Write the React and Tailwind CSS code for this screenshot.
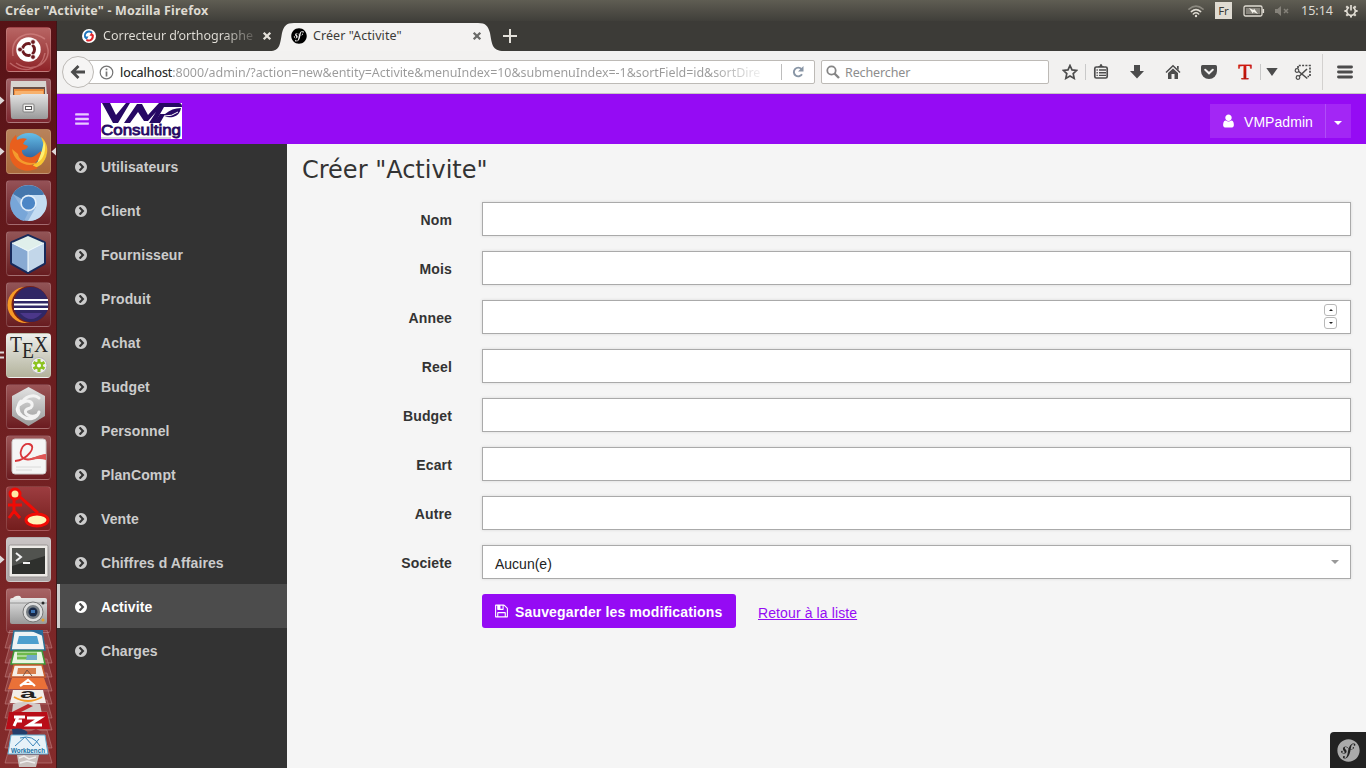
import React from "react";
import { FaSymfony } from "react-icons/fa";

const FA = {
  bars: "M1664 1344v128q0 26-19 45t-45 19h-1408q-26 0-45-19t-19-45v-128q0-26 19-45t45-19h1408q26 0 45 19t19 45zm0-512v128q0 26-19 45t-45 19h-1408q-26 0-45-19t-19-45v-128q0-26 19-45t45-19h1408q26 0 45 19t19 45zm0-512v128q0 26-19 45t-45 19h-1408q-26 0-45-19t-19-45v-128q0-26 19-45t45-19h1408q26 0 45 19t19 45z",
  user: "M1536 1399q0 109-62.5 187t-150.5 78h-854q-88 0-150.5-78t-62.5-187q0-85 8.5-160.5t31.5-152 58.5-131 94-89 134.5-34.5q131 128 313 128t313-128q76 0 134.5 34.5t94 89 58.5 131 31.5 152 8.5 160.5zm-256-887q0 159-112.5 271.5t-271.5 112.5-271.5-112.5-112.5-271.5 112.5-271.5 271.5-112.5 271.5 112.5 112.5 271.5z",
  floppy: "M512 1536h768v-384h-768v384zm896 0h128v-896q0-14-10-38.5t-20-34.5l-281-281q-10-10-34-20t-39-10v416q0 40-28 68t-68 28h-576q-40 0-68-28t-28-68v-416h-128v1280h128v-416q0-40 28-68t68-28h832q40 0 68 28t28 68v416zm-384-928v-320q0-13-9.5-22.5t-22.5-9.5h-192q-13 0-22.5 9.5t-9.5 22.5v320q0 13 9.5 22.5t22.5 9.5h192q13 0 22.5-9.5t9.5-22.5zm640 32v928q0 40-28 68t-68 28h-1344q-40 0-68-28t-28-68v-1344q0-40 28-68t68-28h928q40 0 88 20t76 48l280 280q28 28 48 76t20 88z",
  chevron: "M845 1395l454-454q19-19 19-45t-19-45l-454-454q-19-19-45-19t-45 19l-102 102q-19 19-19 45t19 45l307 307-307 307q-19 19-19 45t19 45l102 102q19 19 45 19t45-19zm819-499q0 209-103 385.5t-279.5 279.5-385.5 103-385.5-103-279.5-279.5-103-385.5 103-385.5 279.5-279.5 385.5-103 385.5 103 279.5 279.5 103 385.5z",
};

function Fa({ name, className }) {
  return (
    <svg viewBox="0 0 1792 1792" className={className} fill="currentColor">
      <path d={FA[name]} />
    </svg>
  );
}

/* ---------- system bar ---------- */

function SystemBar() {
  return (
    <header className="flex h-[21px] shrink-0 items-center bg-linear-to-b from-[#5f5d53] to-[#403f3a] pl-[5px] pr-[8px] text-[#dfdbd2]">
      <h1 className="text-[12.5px] leading-[21px] font-bold tracking-[0.18px] whitespace-nowrap">Créer "Activite" - Mozilla Firefox</h1>
      <div className="ml-auto flex h-[21px] items-center">
        <svg width="18" height="14" viewBox="0 0 18 14" fill="none" strokeLinecap="round">
          <path d="M2 5.2Q9-.8 16 5.2" stroke="#8b887f" strokeWidth="1.6" />
          <path d="M4.300 7.600Q9 3.600 13.700 7.600" stroke="#dfdbd2" strokeWidth="1.500" />
          <path d="M6.300 10Q9 7.600 11.700 10" stroke="#dfdbd2" strokeWidth="1.500" />
          <circle cx="9" cy="12" r="1.200" fill="#dfdbd2" />
        </svg>
        <span className="ml-[10px] flex h-[17px] w-[17px] items-center justify-center bg-[#dfdbd2] text-[11.5px] leading-none text-[#3c3b37]">Fr</span>
        <svg className="ml-[11px]" width="22" height="12" viewBox="0 0 22 12">
          <rect x="1" y="1" width="18" height="10" rx="1.500" fill="none" stroke="#dfdbd2" strokeWidth="1.300" />
          <rect x="3" y="3" width="14" height="6" fill="#85827a" />
          <path d="M20.300 4v4" stroke="#dfdbd2" strokeWidth="1.600" />
          <path d="M6 3l4.500 2 .5-1.500L15 9l-4.500-2-.7 1.500z" fill="#f4f2ea" />
        </svg>
        <svg className="ml-[9px]" width="16" height="12" viewBox="0 0 16 12">
          <path d="M1 4h2.500L7 1v10L3.500 8H1z" fill="#85827a" />
          <path d="M10 4l4 4M14 4l-4 4" stroke="#85827a" strokeWidth="1.500" />
        </svg>
        <span className="ml-[11px] w-[33px] text-[12.5px] leading-[21px] whitespace-nowrap">15:14</span>
        <svg className="ml-[10px]" width="14" height="14" viewBox="0 0 14 14" fill="none" stroke="#dfdbd2">
          <path d="M5 3.200A4.300 4.300 0 1 0 9 3.200" strokeWidth="1.700" />
          <path d="M7 1v5.500" strokeWidth="1.700" />
          <path d="M.4 7h2M11.600 7h2M7 11.600v2M2.300 2.300l1.500 1.500M11.700 2.300l-1.500 1.500M2.300 11.700l1.500-1.500M11.700 11.700l-1.500-1.500" strokeWidth="2" />
        </svg>
      </div>
    </header>
  );
}

/* ---------- launcher ---------- */

const art = {
  ubuntu: (
    <g fill="none">
      <path d="M7 29C4 10 22 1 39 12M40 16C49 35 27 48 10 36M4 36C17 47 36 44 39 26" stroke="#dc9290" strokeWidth="1.500" opacity=".55" />
      <circle cx="22.500" cy="22.500" r="12.200" fill="#fff" />
      <circle cx="22.500" cy="22.500" r="6" stroke="#6d1b20" strokeWidth="3" />
      <path d="M22.500 22.500L11 22.500M22.500 22.500L28.500 12.500M22.500 22.500L28.500 33" stroke="#fff" strokeWidth="1.300" />
      <g fill="#6d1b20" stroke="#fff" strokeWidth=".8">
        <circle cx="14" cy="22.500" r="2.400" /><circle cx="27" cy="15" r="2.400" /><circle cx="27" cy="30" r="2.400" />
      </g>
    </g>
  ),
  files: (
    <g>
      <path d="M5 3h35l1 16H4z" fill="#d8d5d0" />
      <path d="M7 9h32v11H7z" fill="#6b5046" />
      <path d="M8 11h30v8H8z" fill="#ed8b3d" /><path d="M9 13h28v5H9z" fill="#f7b16d" />
      <path d="M4 17h10l2-1h26v23q0 2-2 2H7q-2 0-2-2z" fill="url(#silver)" />
      <rect x="17" y="26" width="11" height="8" rx="1" fill="#f0efed" stroke="#808080" />
      <rect x="19.500" y="28.500" width="6" height="3" fill="#fff" stroke="#585858" />
    </g>
  ),
  firefox: (
    <g>
      <circle cx="23" cy="22" r="18" fill="url(#globe)" />
      <path d="M35 8c5 4 7 10 6 16-1 9-8 16-18 16l5-5c6-2 8-7 7-12l3 1c1-6-1-11-3-16z" fill="#f9c531" />
      <path d="M4 15q2-6 6-9l1 5q5-3 10-1-3 2-4 5l5 2q-1 4-6 4c-1 6 8 10 14 5l5-4c0 8-5 12-9 14l6 3c-11 6-25 2-28-11q-1-7 0-13z" fill="#e95f1d" />
      <path d="M6 20c2 14 17 20 27 13-11 3-20-1-21-8" fill="#f59b2c" />
      <path d="M38 12c3 9 0 18-7 22 2-5 4-9 5-13" fill="#fff071" />
    </g>
  ),
  chromium: (
    <g>
      <circle cx="22.500" cy="23" r="18" fill="#91b6de" />
      <path d="M22.500 23L7 14a18 18 0 0 1 31 0z" fill="#4477ad" />
      <path d="M22.500 15H39a18 18 0 0 1-17 26l8-14z" fill="#c4dcf2" />
      <path d="M7 14l9 14 6 5-4 8A18 18 0 0 1 7 14" fill="#78a6d8" />
      <circle cx="22.500" cy="23" r="8.200" fill="#e5f0fa" /><circle cx="22.500" cy="23" r="6.600" fill="#4c86c6" />
    </g>
  ),
  cube: (
    <g stroke="#1e315d" strokeWidth="1.500" strokeLinejoin="round">
      <path d="M22 5L38 12v20l-16 9L6 32V12z" fill="#82a5d0" stroke="#182a5b" strokeWidth="4" />
      <path d="M22 5l16 7-16 8-16-8z" fill="#e0efeb" stroke="none" />
      <path d="M6 12l16 8v21L6 32z" fill="#88aad3" stroke="none" /><path d="M38 12l-16 8v21l16-9z" fill="#c2d6e9" stroke="none" />
      <path d="M6 12l16 8 16-8M22 20v21" fill="none" stroke="#f7ffff" strokeWidth="1" />
    </g>
  ),
  eclipse: (
    <g>
      <circle cx="19.500" cy="23" r="18" fill="#f79925" /><circle cx="24" cy="22.500" r="18.500" fill="#762019" />
      <circle cx="25" cy="22.500" r="17.500" fill="#302765" />
      <path d="M8 18h34M8 22.500h34M8 27h34" stroke="#fff" strokeWidth="2.200" />
      <path d="M14 31h22q-11 12-22 0z" fill="#4b378a" />
    </g>
  ),
  tex: (
    <g>
      <text x="4" y="19" fontFamily="Liberation Serif, serif" fontSize="24" fill="#262626" textLength="38" lengthAdjust="spacingAndGlyphs">T<tspan dy="6">E</tspan><tspan dy="-6">X</tspan></text>
      <circle cx="33" cy="32.500" r="8" fill="#eee" stroke="#b5b5b5" />
      <path d="M33 26v13M27.500 29.200l11 6.500M38.500 29.200l-11 6.500" stroke="#8dc321" strokeWidth="3" />
      <circle cx="33" cy="32.500" r="4" fill="#8dc321" /><circle cx="33" cy="32.500" r="2" fill="#fff" />
    </g>
  ),
  hex: (
    <g>
      <path d="M22.500 3L39 12v20L22.500 42 6 32V12z" fill="url(#silver)" />
      <path d="M33 14c-5-5-15-1-17 5 6-4 11-1 10 3-1 3-4 2-6 4-3 4 5 8 11 5M15 17c-4 4-4 11 1 15 6 5 15 3 17-4" fill="none" stroke="#f3f3f3" strokeWidth="3" strokeLinecap="round" />
      <path d="M13 20q-4 7 2 13l-3-2q-5-7 1-11z" fill="#fafafa" />
    </g>
  ),
  pdf: (
    <g>
      <rect x="6" y="4" width="34" height="35" rx="3" fill="#f5f5f5" stroke="#cfcbcb" />
      <path d="M9 26c12-1 23-15 14-17-7-1-11 10-6 14 5 4 14-1 22-3" fill="none" stroke="#d9353a" strokeWidth="1.800" />
      <path d="M17 23c5 4 12-3 23-4v6c-8-3-16 2-23-2" fill="#df5555" />
      <path d="M10 32h25M10 35h16" stroke="#dadada" />
    </g>
  ),
  lamp: (
    <g fill="none" stroke="#f10b05" strokeWidth="3">
      <path d="M8 12v14M2 19h14M8 25l-5 7M8 25l6 7M13 10l19 17" />
      <circle cx="9" cy="8" r="5" fill="#ffe9a5" /><ellipse cx="31" cy="34" rx="11" ry="6" fill="#fff4b7" />
    </g>
  ),
  terminal: (
    <g>
      <rect x="3" y="8" width="39" height="32" rx="1.500" fill="#eceae6" stroke="#9a9695" />
      <rect x="6" y="11" width="33" height="26" fill="#2e302d" /><path d="M6 11h33v8L6 29z" fill="#51534f" />
      <path d="M10 16l5 4-5 4M17 26h7" fill="none" stroke="#f2f2f2" strokeWidth="2" />
    </g>
  ),
  camera: (
    <g>
      <rect x="4" y="10" width="37" height="26" rx="2" fill="url(#silver)" /><path d="M6 12q2-5 8-4l2 3z" fill="#eeece9" />
      <path d="M4 15h37" stroke="#858585" strokeWidth=".8" />
      <circle cx="27" cy="24" r="10" fill="#dedede" stroke="#777" /><circle cx="27" cy="24" r="7" fill="#777d83" /><circle cx="27" cy="24" r="4.500" fill="#192947" />
      <rect x="25" y="22" width="4" height="3" fill="#3f76b5" /><circle cx="37" cy="15" r="1.500" fill="#282828" /><circle cx="37" cy="32" r="1.500" fill="#e6a02e" />
    </g>
  ),
};

const launcherItems = [
  { id: "ubuntu", tint: "bg-linear-to-b from-[#b86564] to-[#8e2228]" },
  { id: "files", tint: "bg-linear-to-b from-[#a06368] to-[#7c252e]", left: true },
  { id: "firefox", tint: "bg-linear-to-b from-[#b8835b] to-[#a9693b]", left: true, right: true },
  { id: "chromium", tint: "bg-linear-to-b from-[#955257] to-[#671c23]" },
  { id: "cube", tint: "bg-linear-to-b from-[#935557] to-[#671c20]" },
  { id: "eclipse", tint: "bg-linear-to-b from-[#925457] to-[#681c20]" },
  { id: "tex", tint: "bg-linear-to-b from-[#eeeeec] to-[#b3b39c]", double: true },
  { id: "hex", tint: "bg-linear-to-b from-[#9b5557] to-[#6b1b20]" },
  { id: "pdf", tint: "bg-linear-to-b from-[#9b5557] to-[#6b1b20]" },
  { id: "lamp", tint: "bg-linear-to-b from-[#9c3d40] to-[#741d1d]" },
  { id: "terminal", tint: "bg-linear-to-b from-[#cac5c5] to-[#aaa5a5]", left: true },
  { id: "camera", tint: "bg-linear-to-b from-[#a76465] to-[#7d292d]" },
];

function LauncherTile({ item }) {
  return (
    <li className="flex h-[46px] w-[57px] shrink-0 items-start">
      <svg width="6" height="46" className="shrink-0" fill="#ded8d8">
        {item.left && <path d="M0 18.500l4.500 4-4.500 4z" />}
        {item.double && <path d="M0 18.500h4v2H0zM0 23.500h4v2H0z" />}
      </svg>
      <span className={`block h-[45px] w-[45px] shrink-0 rounded-[4px] border border-white/15 ${item.tint}`}>
        <svg width="45" height="46" viewBox="1 1 45 46" className="block max-w-none overflow-visible">{art[item.id]}</svg>
      </span>
      <svg width="6" height="46" className="shrink-0" fill="#ded8d8">{item.right && <path d="M5 18.500L.5 22.500l4.500 4z" />}</svg>
    </li>
  );
}

function FoldedStack() {
  return (
    <svg width="57" height="138" viewBox="0 630 57 138" className="relative -mt-[4px] shrink-0">
      <g fill="#a85b5b" fillOpacity=".45" stroke="#c98e8e" strokeOpacity=".5">
        {[630, 645, 659, 673, 686, 700, 712, 730, 745].map((y) => (
          <path key={y} d={`M10 ${y}h37l5 18H5z`} />
        ))}
      </g>
      <path d="M14 631h28l3 19H11z" fill="#eef3f4" stroke="#2b7295" strokeWidth="1.500" /><path d="M19 636h18l2 8H17z" fill="#4c9fce" /><path d="M29 630h14v6z" fill="#286c9c" />
      <path d="M14 651h28l3 13H11z" fill="#e9f5e2" stroke="#3d9836" strokeWidth="1.500" /><path d="M17 654h20M17 658h20" stroke="#6fb94c" strokeWidth="3" /><path d="M27 655h10v5H26z" fill="#71abc7" />
      <path d="M14 665h28l3 12H11z" fill="#f6efe7" stroke="#c85b2c" strokeWidth="1.500" /><path d="M18 668h18v6H17z" fill="#d77d4c" /><path d="M23 676l4-6 5 6" fill="none" stroke="#7d5341" />
      <path d="M12 678h32l4 11H8z" fill="#ea7138" /><path d="M20 686l8-6 7 6M23 684h9" fill="none" stroke="#fff" strokeWidth="2.200" />
      <path d="M13 690h30l3 13H10z" fill="#f2eee9" /><text x="20" y="698" fontFamily="Liberation Sans, sans-serif" fontWeight="700" fontSize="13" fill="#222" textLength="16" lengthAdjust="spacingAndGlyphs">a</text><path d="M14 697q14 8 28 0" fill="none" stroke="#f29b29" strokeWidth="2" />
      <path d="M13 704q8-4 27 0l2 10-30-2z" fill="#d2cbc8" /><path d="M10 713l18-9 5 2-16 8z" fill="#bd2a2e" />
      <path d="M9 712h38l3 17H6z" fill="#b90d18" /><path d="M14 717h11M18 717l-4 9M15 721h7M27 718h13l-11 7h13" fill="none" stroke="#fff" strokeWidth="3" />
      <path d="M12 729q12-2 16 4l-8 7-7-4z" fill="#243d6a" /><path d="M27 733l9-4 6 3-10 6z" fill="#8e2e37" />
      <path d="M11 735h34l3 19H8z" fill="#e7f2f8" stroke="#61acd1" /><path d="M15 746l10-9 8 9 6-7M20 738q13-4 20 8" fill="none" stroke="#3d86ba" />
      <text x="11" y="753" fontFamily="Liberation Sans, sans-serif" fontWeight="700" fontSize="6.500" fill="#1671a4" textLength="34" lengthAdjust="spacingAndGlyphs">Workbench</text>
      <path d="M17 755h22l-3 12H19z" fill="#c9c2bf" /><path d="M19 758l5-2 5 3 7-2M20 763l7-2 8 2" fill="none" stroke="#f0eeee" strokeWidth="1.500" />
    </svg>
  );
}

function Launcher() {
  return (
    <aside className="h-[747px] w-[57px] shrink-0 overflow-hidden border-r border-[#3f1517] bg-linear-to-b from-[#571216] to-[#842b2b] pt-[6px]">
      <svg width="0" height="0" className="absolute">
        <defs>
          <linearGradient id="silver" x2="0" y2="1"><stop stopColor="#e3e3e3" /><stop offset="1" stopColor="#999" /></linearGradient>
          <linearGradient id="globe" x2="0" y2="1"><stop stopColor="#65bfe9" /><stop offset="1" stopColor="#183d7d" /></linearGradient>
        </defs>
      </svg>
      <ul className="flex flex-col gap-[5px]">
        {launcherItems.map((item) => <LauncherTile key={item.id} item={item} />)}
      </ul>
      <FoldedStack />
    </aside>
  );
}

/* ---------- browser chrome ---------- */

function CloseX({ color }) {
  return (
    <svg width="10" height="10" viewBox="0 0 10 10" className="shrink-0"><path d="M1.700 1.700l6.600 6.600M8.300 1.700L1.700 8.300" stroke={color} strokeWidth="2.300" /></svg>
  );
}

function TabStrip() {
  return (
    <div className="flex h-[30px] shrink-0 items-center bg-[#3c3b37]">
      <div className="flex w-[219px] items-center pl-[25px] text-[#e4e1da]">
        <svg width="14" height="14" viewBox="0 0 14 14" className="shrink-0">
          <circle cx="7" cy="7" r="7" fill="#fff" />
          <path d="M10 3.800A4 4 0 0 0 4 9.200" fill="none" stroke="#1f76be" strokeWidth="2" /><path d="M2 7.500h4.500L4.500 11z" fill="#1f76be" />
          <path d="M4.500 10.800A4 4 0 0 0 10.200 5.500" fill="none" stroke="#e1252b" strokeWidth="2" /><path d="M12 6.700H7.500l2-3.200z" fill="#e1252b" />
        </svg>
        <span className="mr-[8px] ml-[7px] w-[151px] overflow-hidden bg-linear-to-r from-[#e4e1da] from-80% to-[#5c5a55] bg-clip-text text-[12.5px] leading-[20px] whitespace-nowrap text-transparent">Correcteur d’orthographe</span>
        <CloseX color="#e4e1da" />
      </div>
      <div className="relative -ml-[9px] flex h-[30px] w-[237px] items-center text-[#3c3b37]">
        <svg width="237" height="30" viewBox="0 0 237 30" className="absolute inset-0 max-w-none"><path d="M3 30C13 30 13 23 15 12 17 5 19 2 27 2h184c8 0 10 3 12 10 2 11 2 18 14 18z" fill="#f3f2f1" /></svg>
        <FaSymfony className="relative ml-[24px] h-4 w-4 text-black" />
        <span className="relative ml-[6px] w-[159px] text-[12.500px] leading-[20px] tracking-[0.08px] whitespace-nowrap">Créer "Activite"</span>
        <span className="relative"><CloseX color="#6a6a68" /></span>
      </div>
      <svg width="14" height="14" viewBox="0 0 14 14" className="-ml-px"><path d="M7 0v14M0 7h14" stroke="#e4e1da" strokeWidth="2" /></svg>
    </div>
  );
}

function Toolbar() {
  return (
    <div className="flex h-[43px] shrink-0 items-center border-b border-[#c9c5c1] bg-[#f2f1f0] pl-[5px] text-[#4c4c4c]">
      <span className="z-10 flex h-8 w-8 shrink-0 items-center justify-center rounded-full border border-[#bdbab6] bg-[#f6f5f4]">
        <svg width="16" height="16" viewBox="0 0 16 16"><path d="M15 8H3M8.500 2L2.500 8l6 6" fill="none" stroke="#4b4b4b" strokeWidth="2.800" /></svg>
      </span>
      <div className="-ml-[6px] flex h-6 w-[727px] shrink-0 items-center rounded-r-[2px] border border-[#bdbab6] bg-white pl-[10px]">
        <svg width="15" height="15" viewBox="0 0 15 15" className="shrink-0" fill="none" stroke="#737373"><circle cx="7.500" cy="7.500" r="6.300" strokeWidth="1.200" /><path d="M7.500 6.500v5M7.500 3.500v1.700" strokeWidth="1.700" /></svg>
        <span className="mt-px ml-[6px] w-[642px] bg-linear-to-r from-[#9a9a9a] from-92% to-[#f4f4f4] bg-clip-text text-[12.500px] leading-[22px] tracking-[-0.055px] whitespace-nowrap text-transparent"><span className="text-[#2f2f2f]">localhost</span>:8000/admin/?action=new&amp;entity=Activite&amp;menuIndex=10&amp;submenuIndex=-1&amp;sortField=id&amp;sortDire</span>
        <span className="ml-[19px] h-4 w-px bg-[#bdbdbd]" />
        <svg width="12" height="12" viewBox="0 0 12 12" className="ml-[10px]"><path d="M9.500 3A4.400 4.400 0 1 0 10 8.300" fill="none" stroke="#8895a5" strokeWidth="1.900" /><path d="M11.500 0v5.500H6z" fill="#8895a5" /></svg>
      </div>
      <div className="ml-[6px] flex h-6 w-[228px] shrink-0 items-center rounded-[2px] border border-[#bdbab6] bg-white pl-1">
        <svg width="14" height="14" viewBox="0 0 14 14"><circle cx="5.500" cy="5.500" r="4.200" fill="none" stroke="#858585" strokeWidth="1.800" /><path d="M8.500 8.500l4.500 4.500" stroke="#858585" strokeWidth="2.400" /></svg>
        <span className="mt-px ml-[5px] text-[12.500px] leading-[22px] tracking-[-0.12px] text-[#8d8d8d]">Rechercher</span>
      </div>
      <svg className="ml-[13px] shrink-0" width="16" height="16" viewBox="0 0 16 16"><path d="M8 1.500l2 4.400 4.700.5-3.500 3.200 1 4.800L8 12l-4.200 2.400 1-4.800L1.300 6.400 6 5.900z" fill="none" stroke="#4c4c4c" strokeWidth="1.700" /></svg>
      <span className="ml-[7px] h-4 w-px shrink-0 bg-[#c9c9c9]" />
      <svg className="ml-[7px] shrink-0" width="16" height="16" viewBox="0 0 16 16"><rect x="1.800" y="3" width="12.400" height="11" rx="1.500" fill="none" stroke="#4c4c4c" strokeWidth="1.700" /><path d="M5 3q0-1 1.500-1Q7 0 8 0t1.500 2Q11 2 11 3z" fill="#4c4c4c" /><path d="M3.500 6h1.300M6 6h7M3.500 8.700h1.300M6 8.700h7M3.500 11.400h1.300M6 11.400h7" stroke="#4c4c4c" strokeWidth="1.400" /></svg>
      <svg className="ml-[20px] shrink-0" width="16" height="16" viewBox="0 0 16 16"><path d="M5 1h6v6h4l-7 7.500L1 7h4z" fill="#4c4c4c" /></svg>
      <svg className="ml-[20px] shrink-0" width="16" height="16" viewBox="0 0 16 16"><path d="M1 8.500L8 1.800l7 6.700" fill="none" stroke="#4c4c4c" strokeWidth="1.500" /><path d="M12 2h1.700v4L12 4.500zM3 9l5-4.600L13 9v6h-3.500v-5h-3v5H3z" fill="#4c4c4c" /></svg>
      <svg className="ml-[20px] shrink-0" width="16" height="16" viewBox="0 0 16 16"><path d="M1.500 1h13q1.500 0 1.500 1.500V7a8 8 0 0 1-16 0V2.500Q0 1 1.500 1z" fill="#4c4c4c" /><path d="M4.200 5.800L8 9.300l3.800-3.500" fill="none" stroke="#f2f1f0" strokeWidth="2" strokeLinecap="round" /></svg>
      <span className="ml-[21px] w-[14px] shrink-0 bg-linear-to-b from-[#e21c10] to-[#a01008] bg-clip-text text-center font-['Liberation_Serif',serif] text-[22px] leading-[22px] font-normal text-transparent [-webkit-text-stroke:0.4px_#c81a10]">T</span>
      <span className="ml-[8px] h-4 w-px shrink-0 bg-[#c9c9c9]" />
      <svg className="ml-[5px] shrink-0" width="12" height="10" viewBox="0 0 12 10"><path d="M.3 1h11.400L6 9z" fill="#4c4c4c" /></svg>
      <svg className="ml-[16px] shrink-0" width="18" height="17" viewBox="0 0 18 17" fill="none" stroke="#4c4c4c"><path d="M4 4V1.500h12v11h-2.500" strokeDasharray="2 1.300" strokeWidth="1.700" /><circle cx="3" cy="6.500" r="1.800" strokeWidth="1.200" /><circle cx="4" cy="13.500" r="1.800" strokeWidth="1.200" /><path d="M4.800 7.500l8.500 7M5.500 12l7.500-7" strokeWidth="1.600" /></svg>
      <span className="ml-[10px] h-9 w-px shrink-0 bg-[#d3d1cf]" />
      <svg className="ml-[14px] shrink-0" width="16" height="14" viewBox="0 0 16 14"><path d="M1.500 2h13M1.500 7h13M1.500 12h13" stroke="#4c4c4c" strokeWidth="2.900" strokeLinecap="round" /></svg>
    </div>
  );
}

/* ---------- admin page ---------- */

function Logo() {
  return (
    <svg width="81" height="36" viewBox="0 0 81 36" className="ml-[12px] bg-white">
      <g fill="#260864">
        <path d="M1 0h8l6 12L25 0h4L17 20h-5z" />
        <path d="M23 20L36 1h5l6 11L58 0h20q3 0 3 4H63l-9 16h-6l7-11-8 9h-4l-6-9-8 11z" />
        <path d="M64 11q7-6 16-6-1 7-8 9-5 1-9-1l-4 7h-6l6-9z" />
      </g>
      <path d="M63 13q8 .5 14-4" fill="none" stroke="#fff" />
      <text x="0" y="32" fontFamily="Liberation Sans, sans-serif" fontSize="15" fill="#260864" stroke="#260864" strokeWidth=".8" textLength="80" lengthAdjust="spacingAndGlyphs">Consulting</text>
      <path d="M0 35h70" stroke="#c4bfd0" strokeWidth="1.500" />
    </svg>
  );
}

function AdminHeader() {
  return (
    <header className="flex h-[50px] shrink-0 items-center bg-[#950bf4] pr-[15px] pl-[17px]">
      <Fa name="bars" className="mr-px h-4 w-4 text-[#e8caff]" />
      <div className="mt-[4px] -ml-[2px]"><Logo /></div>
      <div className="mt-[4px] ml-auto flex h-[34px] bg-[#a326f5] text-[14px] text-white">
        <span className="flex w-[115px] items-center pl-[11px]"><Fa name="user" className="mr-[8px] h-[16px] w-[15px]" /><span className="mt-[2px] tracking-[0.06px]">VMPadmin</span></span>
        <span className="flex w-[26px] items-center justify-center border-l border-[#b04cf7]">
          <svg width="8" height="4" viewBox="0 0 8 4" className="mt-[3px] -ml-[2px]"><path d="M0 0h8L4 4z" fill="#fff" /></svg>
        </span>
      </div>
    </header>
  );
}

const menu = ["Utilisateurs", "Client", "Fournisseur", "Produit", "Achat", "Budget", "Personnel", "PlanCompt", "Vente", "Chiffres d Affaires", "Activite", "Charges"];

function Sidebar() {
  return (
    <nav className="w-[230px] shrink-0 bg-[#333]">
      {menu.map((label) => (
        <a
          key={label}
          className={`flex h-[44px] items-center border-l-[3px] pl-[14px] text-[14px] leading-5 font-bold tracking-[0.1px] ${
            label === "Activite" ? "border-[#ccc] bg-[#4c4c4c] text-white" : "border-transparent text-[#ccc]"
          }`}
        >
          <Fa name="chevron" className="mt-[2px] mr-[13px] h-[14px] w-[14px]" />
          <span className="mt-px">{label}</span>
        </a>
      ))}
    </nav>
  );
}

function Spinner() {
  return (
    <span className="-mt-[2px] mr-px flex flex-col gap-px">
      <span className="flex h-3 w-[13px] items-center justify-center rounded-[3px] border border-[#b8b8b8] bg-white"><svg width="4" height="2"><path d="M0 2l2-2 2 2z" fill="#222" /></svg></span>
      <span className="flex h-3 w-[13px] items-center justify-center rounded-[3px] border border-[#b8b8b8] bg-white"><svg width="4" height="2"><path d="M0 0l2 2 2-2z" fill="#222" /></svg></span>
    </span>
  );
}

const fields = ["Nom", "Mois", "Annee", "Reel", "Budget", "Ecart", "Autre", "Societe"];

function Field({ label }) {
  return (
    <div className="flex h-[34px]">
      <label className="w-[150px] pt-[8px] text-right text-[14px] leading-5 font-bold tracking-[0.14px] text-[#333]">{label}</label>
      <div className="ml-[30px] flex flex-1 items-center justify-between border border-[#aaa] bg-white pr-[12px] pl-[12px] text-[14px] text-[#222] shadow-[0_0_3px_rgba(0,0,0,0.12)]">
        <span className="mt-[4px]">{label === "Societe" ? "Aucun(e)" : ""}</span>
        {label === "Annee" && <Spinner />}
        {label === "Societe" && <svg width="8" height="4" viewBox="0 0 8 4" className="-mr-[1px]"><path d="M0 0h8L4 4z" fill="#999" /></svg>}
      </div>
    </div>
  );
}

function ActivityForm() {
  return (
    <main className="flex flex-1 flex-col bg-[#f5f5f5] pl-[15px]">
      <h2 className="mt-[9px] h-[34px] font-['DejaVu_Sans',sans-serif] text-[24px] leading-[34px] text-[#333]">Créer "Activite"</h2>
      <form className="mt-[15px] flex flex-col gap-[15px] pr-[15px]">
        {fields.map((label) => <Field key={label} label={label} />)}
        <div className="flex h-[34px] items-center pl-[180px] text-[14px]">
          <button type="button" className="flex h-[34px] w-[254px] items-center rounded-[3px] bg-[#950bf4] pl-[12px] font-bold tracking-[0.15px] whitespace-nowrap text-white">
            <Fa name="floppy" className="mr-[6px] h-[16px] w-[15px]" /><span className="mt-[2px]">Sauvegarder les modifications</span>
          </button>
          <a className="mt-[4px] ml-[22px] tracking-[0.11px] text-[#950bf4] underline">Retour à la liste</a>
        </div>
      </form>
      <div className="mt-auto ml-auto flex h-9 w-9 items-center justify-center rounded-tl-[4px] bg-[#222]">
        <FaSymfony className="h-[23px] w-[23px] text-[#aaa]" />
      </div>
    </main>
  );
}

export default function App() {
  return (
    <div className="flex h-[768px] w-[1366px] flex-col overflow-hidden font-['Noto_Sans',sans-serif]">
      <SystemBar />
      <div className="flex flex-1">
        <Launcher />
        <div className="flex h-[747px] min-w-0 flex-1 flex-col">
          <TabStrip />
          <Toolbar />
          <div className="flex min-h-0 flex-1 flex-col font-['Liberation_Sans',Arial,sans-serif]">
            <AdminHeader />
            <div className="flex min-h-0 flex-1"><Sidebar /><ActivityForm /></div>
          </div>
        </div>
      </div>
    </div>
  );
}
